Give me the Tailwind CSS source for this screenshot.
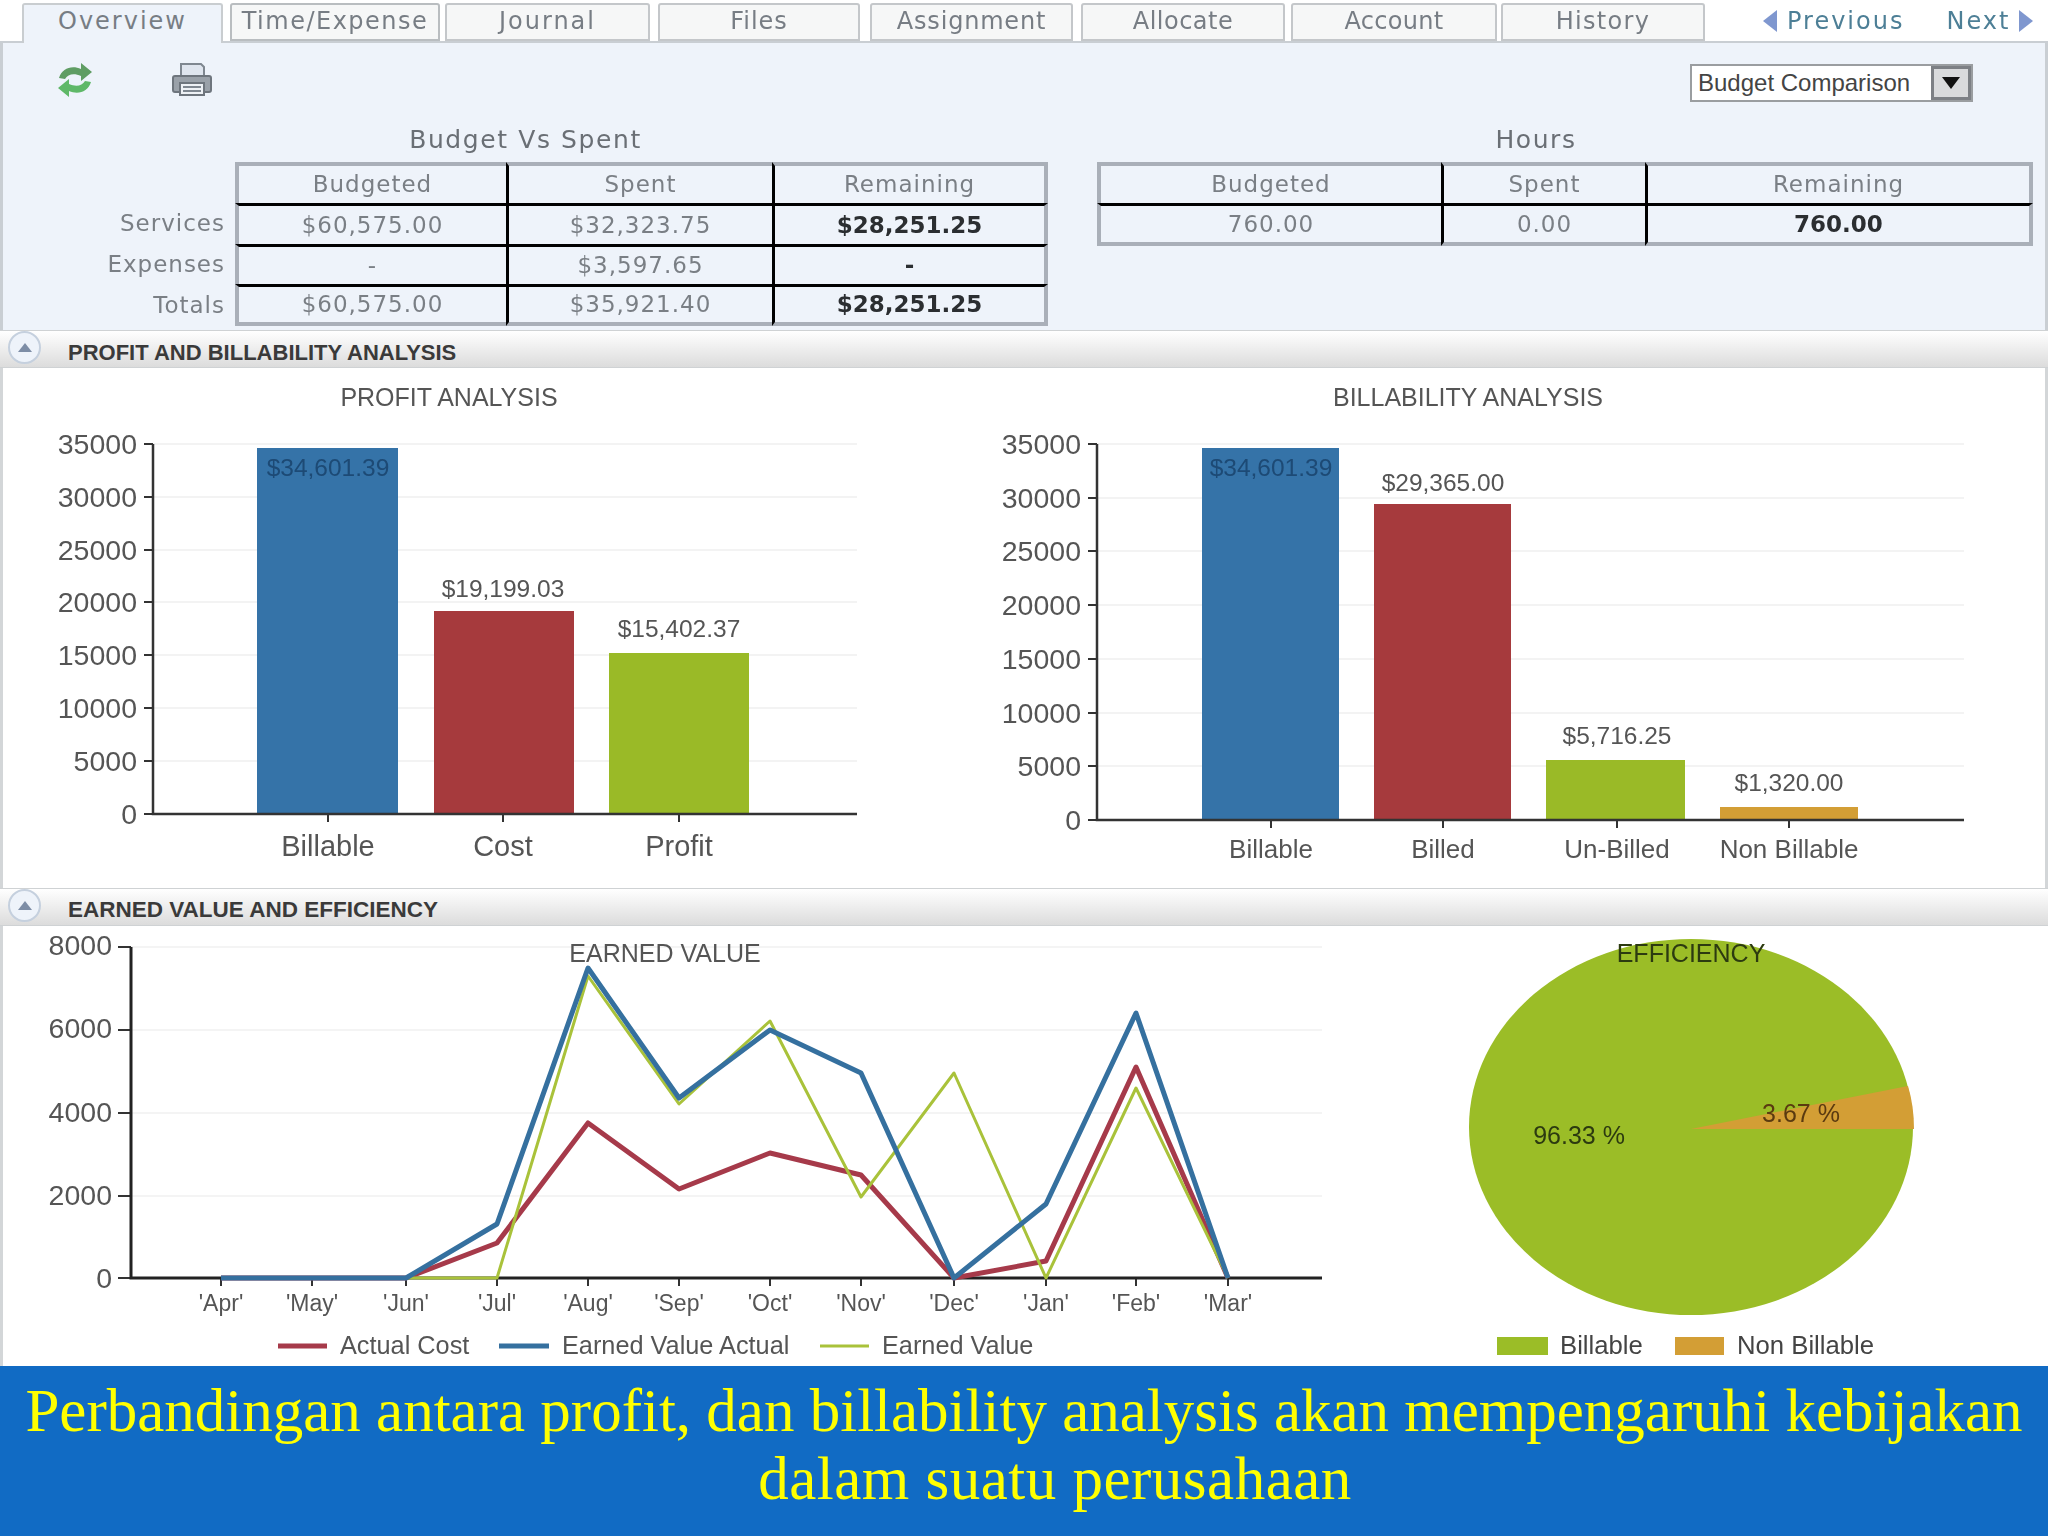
<!DOCTYPE html>
<html lang="en">
<head>
    <meta charset="UTF-8">
    <title>Budget Comparison</title>
    <script src="https://cdn.jsdelivr.net/npm/@tailwindcss/browser@4"></script>
</head>
<body class="bg-white">
<div class="w-[2048px] h-[1536px] flex flex-col overflow-hidden">

    <!-- screenshot area, slightly soft like the source -->
    <div class="h-[1366px] flex flex-col blur-[0.7px] font-['DejaVu_Sans',sans-serif]">

        <!-- Tabs -->
        <div class="h-[41px] flex items-end text-[24px] text-[#777d84]">
            <div class="relative z-10 -mb-[2px] ml-[22px] w-[201px] h-[40px] pb-[6px] tracking-[2px] bg-[#eef3fa] rounded-t-[3px] border-t-2 border-x-2 border-[#c9cdd0] flex items-center justify-center">Overview</div>
            <div class="ml-[7px] w-[210px] h-[38px] pb-[3px] tracking-[1.5px] bg-[#f6f7f7] rounded-t-[3px] border-2 border-[#b9bdc0] flex items-center justify-center">Time/Expense</div>
            <div class="ml-[5px] w-[205px] h-[38px] pb-[3px] tracking-[2px] bg-[#f6f7f7] rounded-t-[3px] border-2 border-[#c4c7ca] flex items-center justify-center">Journal</div>
            <div class="ml-[8px] w-[202px] h-[38px] pb-[3px] tracking-[1px] bg-[#f6f7f7] rounded-t-[3px] border-2 border-[#c4c7ca] flex items-center justify-center">Files</div>
            <div class="ml-[10px] w-[203px] h-[38px] pb-[3px] tracking-[0.8px] bg-[#f6f7f7] rounded-t-[3px] border-2 border-[#c4c7ca] flex items-center justify-center">Assignment</div>
            <div class="ml-[8px] w-[204px] h-[38px] pb-[3px] tracking-[0.5px] bg-[#f6f7f7] rounded-t-[3px] border-2 border-[#c4c7ca] flex items-center justify-center">Allocate</div>
            <div class="ml-[6px] w-[206px] h-[38px] pb-[3px] tracking-[0.3px] bg-[#f6f7f7] rounded-t-[3px] border-2 border-[#c4c7ca] flex items-center justify-center">Account</div>
            <div class="ml-[4px] w-[204px] h-[38px] pb-[3px] tracking-[1.3px] bg-[#f6f7f7] rounded-t-[3px] border-2 border-[#c4c7ca] flex items-center justify-center">History</div>
            <div class="ml-[57px] h-[38px] pb-[3px] flex items-center text-[#4d7f96]">
                <svg width="16" height="24" viewBox="0 0 16 24"><path d="M15 1 L1 12 L15 23 Z" fill="#7f97cf"/></svg>
                <span class="ml-[9px] tracking-[2px]">Previous</span>
                <span class="ml-[42px] tracking-[2px]">Next</span>
                <svg class="ml-[8px]" width="16" height="24" viewBox="0 0 16 24"><path d="M1 1 L15 12 L1 23 Z" fill="#7f97cf"/></svg>
            </div>
        </div>

        <!-- Overview panel -->
        <div class="h-[289px] bg-[#eef3fa] border-x-[3px] border-t-2 border-[#c9ced3] flex flex-col text-[23px] tracking-[1px] text-[#7a7f85]">
            <div class="h-[78px] flex items-start justify-between">
                <div class="flex items-start pt-[19px] pl-[53px]">
                    <svg width="38" height="36" viewBox="0 0 38 36">
                        <path d="M3 16 C6 6 16 3 25 7 L25 1 L36 10 L25 19 L25 14 C18 11 12 12 9 17 Z" fill="#5f9d63"/>
                        <path d="M35 20 C32 30 22 33 13 29 L13 35 L2 26 L13 17 L13 22 C20 25 26 24 29 19 Z" fill="#5fb868"/>
                    </svg>
                    <svg class="ml-[77px]" width="42" height="36" viewBox="0 0 42 36">
                        <path d="M10 14 V2 H30 L33 5 V14" fill="#dfe5ee" stroke="#7f8790" stroke-width="2"/>
                        <rect x="2" y="14" width="38" height="16" rx="2" fill="#9aa1a9" stroke="#6e757d" stroke-width="2"/>
                        <rect x="9" y="21" width="24" height="12" fill="#eef1f5" stroke="#6e757d" stroke-width="2"/>
                        <path d="M12 25 H30 M12 29 H30" stroke="#7f8790" stroke-width="2"/>
                    </svg>
                </div>
                <div class="mt-[21px] mr-[72px] w-[283px] h-[38px] bg-white border-2 border-[#9a9da0] flex items-center justify-between pl-[6px] font-['Liberation_Sans',sans-serif] text-[24px] tracking-normal text-[#444]">
                    <span>Budget Comparison</span>
                    <span class="w-[40px] h-full bg-[#d9dadc] border-[3px] border-[#7d8085] flex items-center justify-center">
                        <svg width="18" height="12" viewBox="0 0 18 12"><path d="M0 0 H18 L9 12 Z" fill="#111"/></svg>
                    </span>
                </div>
            </div>

            <div class="flex items-start">
                <!-- Budget Vs Spent -->
                <div class="ml-[-3px] w-[1051px]">
                    <div class="h-[41px] pb-[3px] flex items-center justify-center font-medium text-[25px] tracking-[1.6px] text-[#6a6f75]">Budget Vs Spent</div>
                    <div class="grid grid-cols-[235px_271px_266px_276px] grid-rows-[41px_41px_40px_42px] text-center">
                        <div></div>
                        <div class="border-t-4 border-l-4 border-[#a9afb8] flex items-center justify-center">Budgeted</div>
                        <div class="border-t-4 border-t-[#a9afb8] border-l-[3px] border-l-black flex items-center justify-center">Spent</div>
                        <div class="border-t-4 border-r-4 border-t-[#a9afb8] border-r-[#a9afb8] border-l-[3px] border-l-black flex items-center justify-center">Remaining</div>

                        <div class="pr-[10px] flex items-center justify-end">Services</div>
                        <div class="border-l-4 border-l-[#a9afb8] border-t-[3px] border-t-black flex items-center justify-center">$60,575.00</div>
                        <div class="border-l-[3px] border-l-black border-t-[3px] border-t-black flex items-center justify-center">$32,323.75</div>
                        <div class="border-l-[3px] border-l-black border-t-[3px] border-t-black border-r-4 border-r-[#a9afb8] flex items-center justify-center font-bold tracking-[0px] text-[#2b2e31]">$28,251.25</div>

                        <div class="pr-[10px] flex items-center justify-end">Expenses</div>
                        <div class="border-l-4 border-l-[#a9afb8] border-t-[3px] border-t-black flex items-center justify-center">-</div>
                        <div class="border-l-[3px] border-l-black border-t-[3px] border-t-black flex items-center justify-center">$3,597.65</div>
                        <div class="border-l-[3px] border-l-black border-t-[3px] border-t-black border-r-4 border-r-[#a9afb8] flex items-center justify-center font-bold tracking-[0px] text-[#2b2e31]">-</div>

                        <div class="pr-[10px] flex items-center justify-end">Totals</div>
                        <div class="border-l-4 border-l-[#a9afb8] border-t-[3px] border-t-black border-b-4 border-b-[#a9afb8] flex items-center justify-center">$60,575.00</div>
                        <div class="border-l-[3px] border-l-black border-t-[3px] border-t-black border-b-4 border-b-[#a9afb8] flex items-center justify-center">$35,921.40</div>
                        <div class="border-l-[3px] border-l-black border-t-[3px] border-t-black border-b-4 border-b-[#a9afb8] border-r-4 border-r-[#a9afb8] flex items-center justify-center font-bold tracking-[0px] text-[#2b2e31]">$28,251.25</div>
                    </div>
                </div>

                <!-- Hours -->
                <div class="ml-[46px] w-[936px]">
                    <div class="h-[41px] pb-[3px] pr-[58px] flex items-center justify-center font-medium text-[25px] tracking-[1.6px] text-[#6a6f75]">Hours</div>
                    <div class="grid grid-cols-[344px_204px_388px] grid-rows-[41px_43px] text-center">
                        <div class="border-t-4 border-l-4 border-[#a9afb8] flex items-center justify-center">Budgeted</div>
                        <div class="border-t-4 border-t-[#a9afb8] border-l-[3px] border-l-black flex items-center justify-center">Spent</div>
                        <div class="border-t-4 border-r-4 border-t-[#a9afb8] border-r-[#a9afb8] border-l-[3px] border-l-black flex items-center justify-center">Remaining</div>
                        <div class="border-l-4 border-l-[#a9afb8] border-t-[3px] border-t-black border-b-4 border-b-[#a9afb8] flex items-center justify-center">760.00</div>
                        <div class="border-l-[3px] border-l-black border-t-[3px] border-t-black border-b-4 border-b-[#a9afb8] flex items-center justify-center">0.00</div>
                        <div class="border-l-[3px] border-l-black border-t-[3px] border-t-black border-b-4 border-b-[#a9afb8] border-r-4 border-r-[#a9afb8] flex items-center justify-center font-bold tracking-[0px] text-[#2b2e31]">760.00</div>
                    </div>
                </div>
            </div>
        </div>

        <!-- Profit section header -->
        <div class="relative h-[38px] bg-gradient-to-b from-white to-[#dcdcdc] border-y border-[#cfd2d4] flex items-center pt-[6px] pl-[68px] font-['Liberation_Sans',sans-serif] font-bold text-[22px] text-[#3a3a3a]">
            <span>PROFIT AND BILLABILITY ANALYSIS</span>
            <span class="absolute left-[8px] top-0 w-[33px] h-[33px] rounded-full bg-[#eef3fa] border-2 border-[#c5d0de] flex items-center justify-center">
                <svg width="14" height="9" viewBox="0 0 14 9"><path d="M7 0 L14 9 H0 Z" fill="#7d8da6"/></svg>
            </span>
        </div>

        <!-- Profit / billability charts -->
        <div class="h-[520px] bg-white border-x-[3px] border-[#d3d6d8] flex ml-0">
            <svg class="ml-[-3px] shrink-0" width="1000" height="520" viewBox="0 368 1000 520" font-family="Liberation Sans" fill="#555">
                <text x="449" y="406" text-anchor="middle" font-size="25">PROFIT ANALYSIS</text>
                <g stroke="#f3f3f3" stroke-width="2">
                    <path d="M153 444H857M153 497H857M153 550H857M153 602H857M153 655H857M153 708H857M153 761H857"/>
                </g>
                <g font-size="28.5" text-anchor="end">
                    <text x="137" y="454">35000</text><text x="137" y="507">30000</text><text x="137" y="560">25000</text><text x="137" y="612">20000</text><text x="137" y="665">15000</text><text x="137" y="718">10000</text><text x="137" y="771">5000</text><text x="137" y="824">0</text>
                </g>
                <path d="M144 444H153M144 497H153M144 550H153M144 602H153M144 655H153M144 708H153M144 761H153M144 814H153M328 814V822M503 814V822M679 814V822" stroke="#333" stroke-width="2"/>
                <rect x="257" y="448" width="141" height="366" fill="#3573a8"/>
                <rect x="434" y="611" width="140" height="203" fill="#a63a3d"/>
                <rect x="609" y="653" width="140" height="161" fill="#9aba27"/>
                <path d="M153 444V814H857" fill="none" stroke="#333" stroke-width="2.5"/>
                <text x="328" y="476" text-anchor="middle" font-size="24.5" fill="#1d4a75">$34,601.39</text>
                <text x="503" y="597" text-anchor="middle" font-size="24.5">$19,199.03</text>
                <text x="679" y="637" text-anchor="middle" font-size="24.5">$15,402.37</text>
                <g font-size="29" text-anchor="middle">
                    <text x="328" y="856">Billable</text><text x="503" y="856">Cost</text><text x="679" y="856">Profit</text>
                </g>
            </svg>
            <svg class="shrink-0" width="1045" height="520" viewBox="1000 368 1045 520" font-family="Liberation Sans" fill="#555">
                <text x="1468" y="406" text-anchor="middle" font-size="25">BILLABILITY ANALYSIS</text>
                <g stroke="#f3f3f3" stroke-width="2">
                    <path d="M1097 444H1964M1097 498H1964M1097 551H1964M1097 605H1964M1097 659H1964M1097 713H1964M1097 766H1964"/>
                </g>
                <g font-size="28.5" text-anchor="end">
                    <text x="1081" y="454">35000</text><text x="1081" y="508">30000</text><text x="1081" y="561">25000</text><text x="1081" y="615">20000</text><text x="1081" y="669">15000</text><text x="1081" y="723">10000</text><text x="1081" y="776">5000</text><text x="1081" y="830">0</text>
                </g>
                <path d="M1088 444H1097M1088 498H1097M1088 551H1097M1088 605H1097M1088 659H1097M1088 713H1097M1088 766H1097M1088 820H1097M1271 820V828M1443 820V828M1617 820V828M1789 820V828" stroke="#333" stroke-width="2"/>
                <rect x="1202" y="448" width="137" height="372" fill="#3573a8"/>
                <rect x="1374" y="504" width="137" height="316" fill="#a63a3d"/>
                <rect x="1546" y="760" width="139" height="60" fill="#9aba27"/>
                <rect x="1720" y="807" width="138" height="13" fill="#d39e35"/>
                <path d="M1097 444V820H1964" fill="none" stroke="#333" stroke-width="2.5"/>
                <text x="1271" y="476" text-anchor="middle" font-size="24.5" fill="#1d4a75">$34,601.39</text>
                <text x="1443" y="491" text-anchor="middle" font-size="24.5">$29,365.00</text>
                <text x="1617" y="744" text-anchor="middle" font-size="24.5">$5,716.25</text>
                <text x="1789" y="791" text-anchor="middle" font-size="24.5">$1,320.00</text>
                <g font-size="26" text-anchor="middle">
                    <text x="1271" y="858">Billable</text><text x="1443" y="858">Billed</text><text x="1617" y="858">Un-Billed</text><text x="1789" y="858">Non Billable</text>
                </g>
            </svg>
        </div>

        <!-- Earned value section header -->
        <div class="relative h-[38px] bg-gradient-to-b from-white to-[#dcdcdc] border-y border-[#cfd2d4] flex items-center pt-[6px] pl-[68px] font-['Liberation_Sans',sans-serif] font-bold text-[22.5px] text-[#3a3a3a]">
            <span>EARNED VALUE AND EFFICIENCY</span>
            <span class="absolute left-[8px] top-0 w-[33px] h-[33px] rounded-full bg-[#eef3fa] border-2 border-[#c5d0de] flex items-center justify-center">
                <svg width="14" height="9" viewBox="0 0 14 9"><path d="M7 0 L14 9 H0 Z" fill="#7d8da6"/></svg>
            </span>
        </div>

        <!-- Earned value / efficiency charts -->
        <div class="h-[440px] bg-white border-l-[3px] border-[#d3d6d8] flex">
            <svg class="ml-[-3px] shrink-0" width="1400" height="440" viewBox="0 926 1400 440" font-family="Liberation Sans" fill="#555">
                <g stroke="#f4f4f4" stroke-width="2"><path d="M131 947H1322M131 1030H1322M131 1113H1322M131 1196H1322"/></g>
                <text x="665" y="962" text-anchor="middle" font-size="25">EARNED VALUE</text>
                <g font-size="28.5" text-anchor="end">
                    <text x="112" y="955">8000</text><text x="112" y="1038">6000</text><text x="112" y="1122">4000</text><text x="112" y="1205">2000</text><text x="112" y="1288">0</text>
                </g>
                <path d="M118 947H131M118 1030H131M118 1113H131M118 1196H131M118 1278H131M221 1278V1286M312 1278V1286M406 1278V1286M497 1278V1286M588 1278V1286M679 1278V1286M770 1278V1286M861 1278V1286M954 1278V1286M1046 1278V1286M1136 1278V1286M1228 1278V1286" stroke="#333" stroke-width="2"/>
                <path d="M131 947V1278H1322" fill="none" stroke="#222" stroke-width="3"/>
                <polyline points="221,1278 312,1278 406,1278 497,1243 588,1123 679,1189 770,1153 861,1175 954,1278 1046,1261 1136,1067 1228,1278" fill="none" stroke="#a63a4a" stroke-width="5" stroke-linejoin="round"/>
                <polyline points="221,1278 312,1278 406,1278 497,1278 588,976 679,1104 770,1021 861,1197 954,1073 1046,1278 1136,1088 1228,1278" fill="none" stroke="#a9c23a" stroke-width="3" stroke-linejoin="round"/>
                <polyline points="221,1278 312,1278 406,1278 497,1224 588,968 679,1098 770,1030 861,1073 954,1278 1046,1204 1136,1013 1228,1278" fill="none" stroke="#35709f" stroke-width="5" stroke-linejoin="round"/>
                <g font-size="23" text-anchor="middle">
                    <text x="221" y="1311">'Apr'</text><text x="312" y="1311">'May'</text><text x="406" y="1311">'Jun'</text><text x="497" y="1311">'Jul'</text><text x="588" y="1311">'Aug'</text><text x="679" y="1311">'Sep'</text><text x="770" y="1311">'Oct'</text><text x="861" y="1311">'Nov'</text><text x="954" y="1311">'Dec'</text><text x="1046" y="1311">'Jan'</text><text x="1136" y="1311">'Feb'</text><text x="1228" y="1311">'Mar'</text>
                </g>
                <path d="M278 1346H327" stroke="#a63a4a" stroke-width="5"/>
                <path d="M499 1346H549" stroke="#35709f" stroke-width="5"/>
                <path d="M820 1346H869" stroke="#a9c23a" stroke-width="3"/>
                <g font-size="25.3">
                    <text x="340" y="1354">Actual Cost</text><text x="562" y="1354">Earned Value Actual</text><text x="882" y="1354">Earned Value</text>
                </g>
            </svg>
            <svg class="shrink-0" width="645" height="440" viewBox="1400 926 645 440" font-family="Liberation Sans" fill="#444">
                <ellipse cx="1691" cy="1127" rx="222" ry="188" fill="#9bbd27"/>
                <path d="M1691 1129 L1908 1086 Q1914 1106 1914 1129 Z" fill="#d39e35"/>
                <text x="1691" y="962" text-anchor="middle" font-size="25" fill="#2c3a10">EFFICIENCY</text>
                <text x="1579" y="1144" text-anchor="middle" font-size="25" fill="#2c3a10">96.33 %</text>
                <text x="1801" y="1122" text-anchor="middle" font-size="25" fill="#5a3a10">3.67 %</text>
                <rect x="1497" y="1337" width="51" height="18" fill="#9bbd27"/>
                <rect x="1675" y="1337" width="49" height="18" fill="#d39e35"/>
                <g font-size="25.7">
                    <text x="1560" y="1354">Billable</text><text x="1737" y="1354">Non Billable</text>
                </g>
            </svg>
        </div>
    </div>

    <!-- Caption -->
    <div class="h-[170px] bg-[#116bc4] text-[#ffff00] font-['Liberation_Serif',serif] text-[61px] leading-[68px] text-center pt-[11px]">
        <p>Perbandingan antara profit, dan billability analysis akan mempengaruhi kebijakan</p>
        <p class="pl-[62px] tracking-[0.5px]">dalam suatu perusahaan</p>
    </div>
</div>
</body>
</html>
